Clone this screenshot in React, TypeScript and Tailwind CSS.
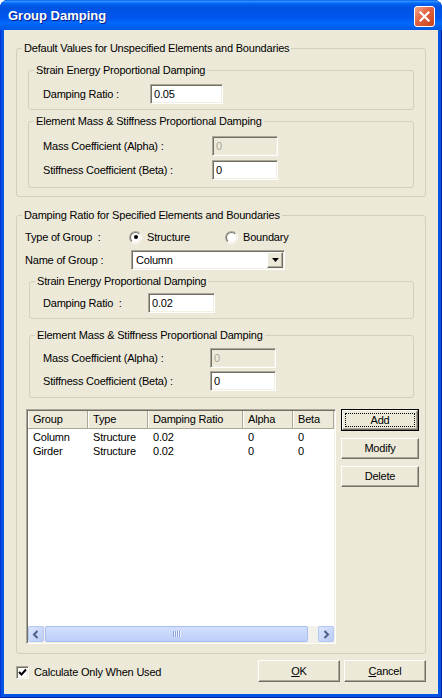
import React from 'react';

const raised =
  'bg-[#ECE9D8] border border-t-white border-l-white border-r-[#716F64] border-b-[#716F64] shadow-[inset_-1px_-1px_0_#ACA899]';
const sunken =
  'border border-t-[#ACA899] border-l-[#ACA899] border-r-white border-b-white shadow-[inset_1px_1px_0_#716F64,inset_-1px_-1px_0_#F1EFE2]';

interface GroupBoxProps {
  title: string;
  className?: string;
  children: React.ReactNode;
}

function GroupBox({ title, className = '', children }: GroupBoxProps) {
  return (
    <fieldset className={`min-w-0 border border-[#D0D0BF] rounded-[3px] ${className}`}>
      <legend className="ml-[5px] px-[2px] leading-[13px] whitespace-pre">{title}</legend>
      {children}
    </fieldset>
  );
}

function TextBox({ value, disabled, className = '' }: { value: string; disabled?: boolean; className?: string }) {
  return (
    <div
      className={`h-[20px] flex items-center pl-[3px] ${sunken} ${
        disabled ? 'bg-[#ECE9D8] text-[#ACA899]' : 'bg-white text-black'
      } ${className}`}
    >
      {value}
    </div>
  );
}

function Field({ label, labelW, value, inputW, disabled }: { label: string; labelW: string; value: string; inputW: string; disabled?: boolean }) {
  return (
    <div className="flex items-center">
      <span className={`${labelW} whitespace-pre`}>{label}</span>
      <TextBox value={value} disabled={disabled} className={inputW} />
    </div>
  );
}

function Radio({ checked, label }: { checked?: boolean; label: string }) {
  return (
    <div className="flex items-center">
      <div className="w-[13px] h-[13px] rounded-full border border-t-[#ACA899] border-l-[#ACA899] border-r-white border-b-white">
        <div className="w-full h-full rounded-full bg-white border border-t-[#716F64] border-l-[#716F64] border-r-[#F1EFE2] border-b-[#F1EFE2] flex items-center justify-center">
          {checked && <div className="w-[4px] h-[4px] rounded-full bg-black" />}
        </div>
      </div>
      <span className="ml-[5px]">{label}</span>
    </div>
  );
}

function Button({ children, className = '', isDefault }: { children: React.ReactNode; className?: string; isDefault?: boolean }) {
  if (isDefault) {
    return (
      <div className={`border border-black flex ${className}`}>
        <div className={`flex-1 flex p-[2px] ${raised}`}>
          <div className="flex-1 border border-dotted border-black flex items-center justify-center">{children}</div>
        </div>
      </div>
    );
  }
  return <div className={`flex items-center justify-center ${raised} ${className}`}>{children}</div>;
}

function Combo() {
  return (
    <div className={`w-[154px] h-[20px] bg-white flex items-center p-[1px] ${sunken}`}>
      <span className="flex-1 pl-[3px]">Column</span>
      <div className={`w-[16px] h-[16px] flex items-center justify-center ${raised}`}>
        <svg width="7" height="4" viewBox="0 0 7 4">
          <path d="M0 0 H7 L3.5 4 Z" fill="#000" />
        </svg>
      </div>
    </div>
  );
}

const columns = [
  { label: 'Group', w: 'w-[60px]' },
  { label: 'Type', w: 'w-[60px]' },
  { label: 'Damping Ratio', w: 'w-[95px]' },
  { label: 'Alpha', w: 'w-[50px]' },
  { label: 'Beta', w: 'flex-1' },
];

const rows = [
  ['Column', 'Structure', '0.02', '0', '0'],
  ['Girder', 'Structure', '0.02', '0', '0'],
];

function ScrollButton({ dir }: { dir: 'left' | 'right' }) {
  return (
    <div className="w-[16px] h-[16px] rounded-[2px] border border-[#B4C8F6] bg-[linear-gradient(135deg,#DCE6FD,#BACBF5)] flex items-center justify-center">
      <svg width="8" height="9" viewBox="0 0 8 9">
        <path
          d={dir === 'left' ? 'M5.5 1 L2 4.5 L5.5 8' : 'M2.5 1 L6 4.5 L2.5 8'}
          fill="none"
          stroke="#4D6185"
          strokeWidth="2"
        />
      </svg>
    </div>
  );
}

function ListView() {
  return (
    <div className={`w-[310px] h-[235px] bg-white flex flex-col p-[1px] ${sunken}`}>
      <div className="h-[18px] flex bg-[#ECE9D8] border-b border-[#ACA899]">
        {columns.map((c) => (
          <div
            key={c.label}
            className={`${c.w} flex items-center pl-[5px] border-r border-[#ACA899] shadow-[inset_1px_0_0_#fff]`}
          >
            {c.label}
          </div>
        ))}
      </div>
      <div className="flex-1 pt-[1px]">
        {rows.map((r) => (
          <div key={r[0]} className="flex h-[14px] items-center">
            {r.map((cell, i) => (
              <div key={i} className={`${columns[i].w} pl-[5px]`}>
                {cell}
              </div>
            ))}
          </div>
        ))}
      </div>
      <div className="h-[16px] flex bg-[#F3F1EC]">
        <ScrollButton dir="left" />
        <div className="ml-[1px] w-[263px] rounded-[2px] border border-[#A8BDF0] bg-[linear-gradient(180deg,#D3DFFD,#BDCEF8)] flex items-center justify-center gap-[1px]">
          {[0, 1, 2, 3].map((i) => (
            <div key={i} className="w-[1px] h-[6px] bg-[#8BA3E0] shadow-[1px_0_0_#EEF3FF]" />
          ))}
        </div>
        <div className="flex-1" />
        <ScrollButton dir="right" />
      </div>
    </div>
  );
}

export default function App() {
  return (
    <div className="w-[442px] h-[698px] bg-white font-['Liberation_Sans',Arial,sans-serif] text-[11px] tracking-[-0.2px] text-black">
      <div className="w-full h-full flex flex-col rounded-t-[8px] bg-[#0055E5] shadow-[inset_1px_0_0_#0831D9,inset_-1px_0_0_#001EA0,inset_0_-1px_0_#001EA0]">
        <div className="h-[30px] flex items-start rounded-t-[8px] bg-[linear-gradient(180deg,#0058EE_0%,#3593FF_4%,#288EFF_6%,#127DFF_8%,#036FFC_10%,#0262EE_14%,#0057E5_20%,#0054E3_24%,#0055EB_56%,#005BF5_66%,#026AFE_76%,#0062EF_86%,#0058E6_100%)]">
          <span className="ml-[8px] mt-[8px] leading-[16px] text-[13px] tracking-normal font-bold text-white [text-shadow:1px_1px_0_#0A1E8A]">
            Group Damping
          </span>
          <div className="ml-auto mr-[7px] mt-[6px] w-[21px] h-[21px] rounded-[3px] border border-white bg-[linear-gradient(135deg,#F2A68C_0%,#E2623F_45%,#C8401B_100%)] flex items-center justify-center">
            <svg width="11" height="11" viewBox="0 0 11 11">
              <path d="M1.5 1.5 L9.5 9.5 M9.5 1.5 L1.5 9.5" stroke="#fff" strokeWidth="2.2" strokeLinecap="square" />
            </svg>
          </div>
        </div>

        <div className="flex-1 mx-[4px] mb-[4px] bg-[#ECE9D8] px-[12px] flex flex-col">
          <GroupBox title="Default Values for Unspecified Elements and Boundaries" className="mt-[12px]">
            <div className="px-[11px] pt-[9px] pb-[8px]">
              <GroupBox title="Strain Energy Proportional Damping">
                <div className="pl-[14px] pt-[7px] pb-[5px]">
                  <Field label="Damping Ratio :" labelW="w-[107px]" value="0.05" inputW="w-[73px]" />
                </div>
              </GroupBox>
              <GroupBox title="Element Mass & Stiffness Proportional Damping" className="mt-[5px]">
                <div className="flex flex-col gap-[4px] pl-[14px] pt-[8px] pb-[7px]">
                  <Field label="Mass Coefficient (Alpha) :" labelW="w-[169px]" value="0" inputW="w-[66px]" disabled />
                  <Field label="Stiffness Coefficient (Beta) :" labelW="w-[169px]" value="0" inputW="w-[66px]" />
                </div>
              </GroupBox>
            </div>
          </GroupBox>

          <GroupBox title="Damping Ratio for Specified Elements and Boundaries" className="mt-[12px]">
            <div className="flex flex-col pb-[9px]">
              <div className="flex items-center h-[14px] mt-[8px] pl-[8px]">
                <span className="w-[104px] whitespace-pre">Type of Group  :</span>
                <div className="w-[96px]">
                  <Radio checked label="Structure" />
                </div>
                <Radio label="Boundary" />
              </div>
              <div className="flex items-center mt-[6px] pl-[8px]">
                <span className="w-[106px]">Name of Group :</span>
                <Combo />
              </div>
              <div className="ml-[12px] mr-[11px]">
                <GroupBox title="Strain Energy Proportional Damping" className="mt-[5px]">
                  <div className="pl-[13px] pt-[5px] pb-[5px]">
                    <Field label="Damping Ratio  :" labelW="w-[105px]" value="0.02" inputW="w-[67px]" />
                  </div>
                </GroupBox>
                <GroupBox title="Element Mass & Stiffness Proportional Damping" className="mt-[10px]">
                  <div className="flex flex-col gap-[3px] pl-[13px] pt-[6px] pb-[6px]">
                    <Field label="Mass Coefficient (Alpha) :" labelW="w-[167px]" value="0" inputW="w-[66px]" disabled />
                    <Field label="Stiffness Coefficient (Beta) :" labelW="w-[167px]" value="0" inputW="w-[66px]" />
                  </div>
                </GroupBox>
              </div>
              <div className="flex mt-[11px] pl-[9px] gap-[5px]">
                <ListView />
                <div className="flex flex-col gap-[7px] w-[78px]">
                  <Button isDefault className="h-[22px]">Add</Button>
                  <Button className="h-[21px]">Modify</Button>
                  <Button className="h-[21px]">Delete</Button>
                </div>
              </div>
            </div>
          </GroupBox>

          <div className="flex items-center mt-[6px] h-[22px]">
            <div className="flex items-center mt-[3px]">
              <div className={`w-[13px] h-[13px] bg-white flex items-center justify-center ${sunken}`}>
                <svg width="9" height="9" viewBox="0 0 9 9">
                  <path d="M1 4 L3.5 6.5 L8 1.5" fill="none" stroke="#000" strokeWidth="2" />
                </svg>
              </div>
              <span className="ml-[5px]">Calculate Only When Used</span>
            </div>
            <div className="ml-auto flex gap-[4px]">
              <Button className="w-[82px] h-[22px]">
                <span>
                  <span className="underline">O</span>K
                </span>
              </Button>
              <Button className="w-[82px] h-[22px]">
                <span>
                  <span className="underline">C</span>ancel
                </span>
              </Button>
            </div>
          </div>
        </div>
      </div>
    </div>
  );
}
